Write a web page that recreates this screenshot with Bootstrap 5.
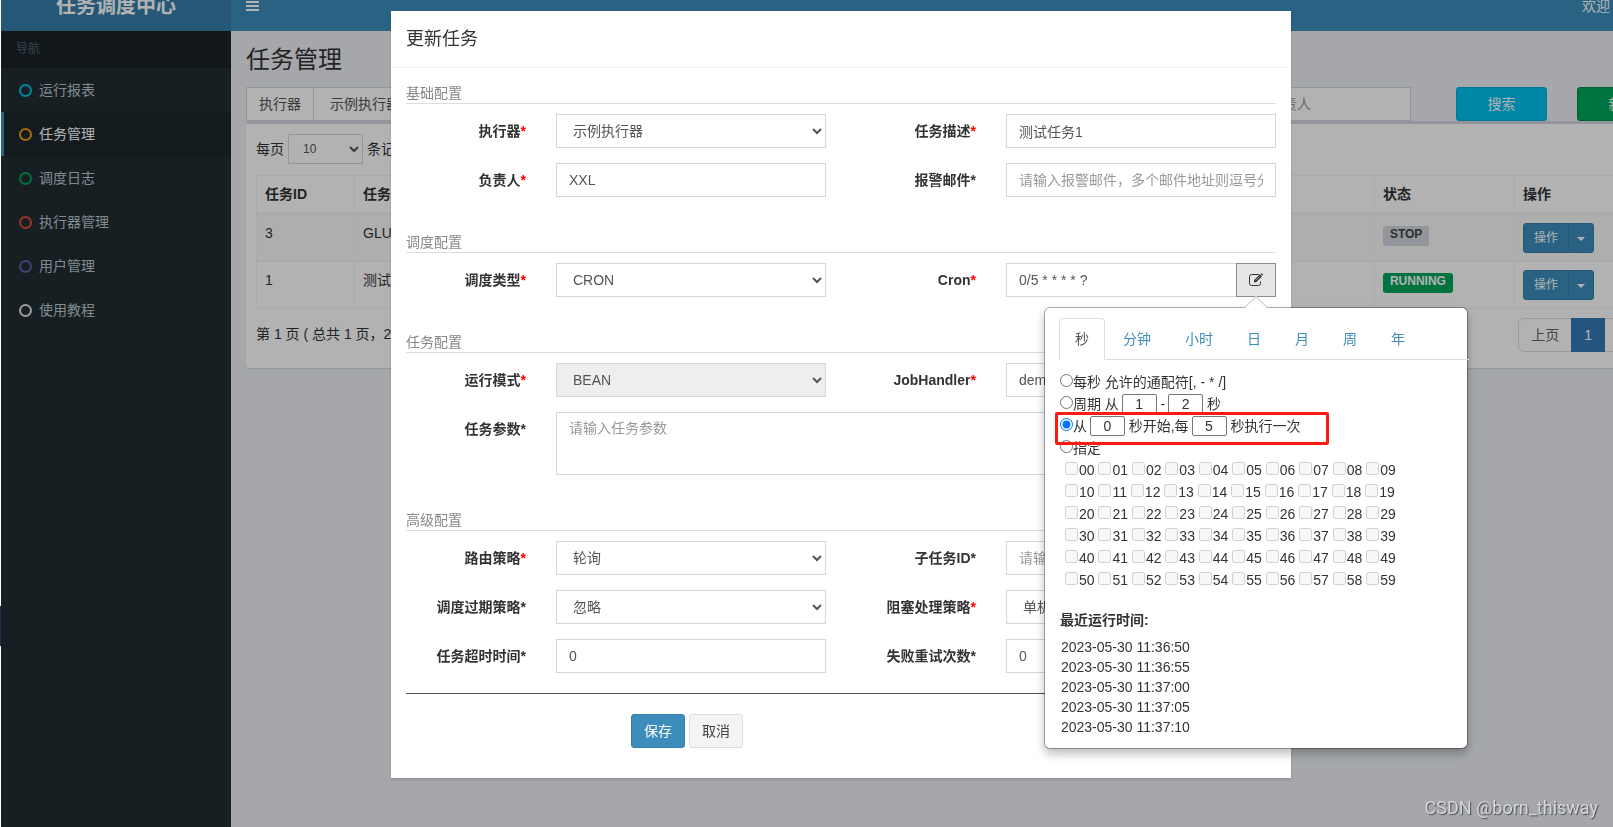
<!DOCTYPE html>
<html lang="zh-CN">
<head>
<meta charset="utf-8">
<meta name="viewport" content="width=device-width, initial-scale=1">
<title>任务调度中心</title>
<link rel="stylesheet" href="https://cdn.jsdelivr.net/npm/bootstrap@5.3.0/dist/css/bootstrap.min.css">
<style>
  :root { --edge: #d2d6de; --brand: #3c8dbc; }
  html, body { height: 100%; }
  body {
    font: 14px/20px "Liberation Sans", "Noto Sans CJK SC", sans-serif;
    color: #333; overflow: hidden;
    background: linear-gradient(#1b2c50, #1b2c50) 0 606px / 1px 40px no-repeat #fff;
  }
  a { text-decoration: none; }
  /* the console is wider than the window and scrolled down a little */
  .console { width: calc(100vw + 69px); min-height: calc(100vh + 19px); margin: -19px 0 0 1px; }
  .side { width: 230px; background: #222d32; }
  .logo { height: 50px; line-height: 50px; background: #367fa9; color: #fff; font-size: 20px; }
  .topbar { height: 50px; background: var(--brand); color: #fff; padding-right: 73px; }
  .toggle { width: 42px; }
  .toggle svg { display: block; margin: auto; }
  .nav-title { background: #1a2226; color: #4b646f; font-size: 12px; line-height: 17px; padding: 10px 15px; }
  .side a { display: flex; align-items: center; gap: 7px; height: 44px; padding-left: 15px; color: #b8c7ce; border-left: 3px solid transparent; }
  .side a.active { color: #fff; background: #1e282c; border-color: var(--brand); }
  .ring { width: 13px; height: 13px; border: 2px solid; border-radius: 50%; }
  .content { background: #ecf0f5; padding: 0 15px; }
  .content h1 { font-size: 24px; line-height: 26px; font-weight: 400; margin: 16px 0 14px; }
  .form-control, .input-group-text { font-size: 14px; line-height: 20px; padding: 6px 12px; border: 1px solid var(--edge); border-radius: 0; color: #555; background: #fff; }
  .form-control { height: 34px; }
  .form-control:disabled { background: #eee; opacity: 1; }
  select.form-control { appearance: auto; }
  textarea.form-control { height: 63px; line-height: 18px; resize: none; }
  .form-control::placeholder { color: #999; opacity: 1; }
  .btn { font-size: 14px; line-height: 20px; padding: 6px 12px; border-radius: 3px; }
  .btn-main { background: var(--brand); border-color: #367fa9; color: #fff; }
  .btn-plain { background: #f4f4f4; border-color: #ddd; color: #444; }
  .btn-find { background: #00c0ef; border-color: #00acd6; color: #fff; }
  .btn-new { background: #00a65a; border-color: #008d4c; color: #fff; }
  .btn-xs2 { font-size: 12px; line-height: 18px; padding: 5px 10px; }
  .btn-xs2.dropdown-toggle { padding: 5px 8px; }
  .btn-xs2.dropdown-toggle::after { margin: 0; border-width: 4px 4px 0; vertical-align: 1px; }
  .find .author { padding-right: 30px; }
  .panel { background: #fff; border-top: 3px solid var(--edge); border-radius: 3px; padding: 10px; box-shadow: 0 1px 1px rgba(0,0,0,.1); height: 247px; }
  .panel select.form-control { width: 75px; height: 30px; padding: 4px 10px; font-size: 12px; }
  .jobs { table-layout: fixed; margin: 11px 0 9px; color: #333; border-color: #f4f4f4; --bs-table-color: #333; }
  .jobs th, .jobs td { padding: 8px; border: 1px solid #f4f4f4; vertical-align: top; white-space: nowrap; overflow: hidden; }
  .jobs thead th { border-bottom-width: 3px; }
  .jobs tbody tr:first-child { --bs-table-bg: #f9f9f9; }
  .state { display: inline-block; font-size: 12px; font-weight: 700; line-height: 16px; padding: 0 7px 4px; margin-top: 2px; border-radius: 3px; }
  .state-stop { background: var(--edge); color: #444; }
  .state-run { background: #00a65a; color: #fff; }
  .page-link { font-size: 14px; line-height: 20px; padding: 6px 12px; color: #666; border-color: #ddd; background: #fff; }
  .page-item.active .page-link { background: #337ab7; border-color: #337ab7; color: #fff; }
  .page-note { padding-top: 6px; }
  .modal-backdrop { left: 1px; width: 100vw; }
  .modal-backdrop.show { opacity: .3; }
  .modal { width: calc(100vw + 69px); overflow: visible; }
  .modal-dialog { max-width: 900px; margin: 11px auto; }
  .modal-content { border: 0; border-radius: 0; color: #333; box-shadow: 0 2px 3px rgba(0,0,0,.125); }
  .modal-header { padding: 15px; border-color: #f4f4f4; border-radius: 0; }
  .modal-title { font-size: 18px; line-height: 26px; font-weight: 400; }
  .modal-body { padding: 15px; }
  .modal-body .row, .find { --bs-gutter-x: 30px; }
  .group-title { color: #888; line-height: 20px; border-bottom: 1px solid #ddd; margin: 0 0 10px; }
  .group-gap { margin-top: 35px; }
  .line { margin-bottom: 15px; }
  .line label { font-weight: 700; text-align: right; padding-top: 7px; }
  .req { color: red; }
  .modal-body hr { margin: 20px 0; color: #333; opacity: .85; }
  .btn-edit { width: 40px; background: #e6e6e6; border-color: #8c8c8c; border-radius: 0; padding: 0; }
  .btn-edit svg { display: block; margin: auto; }
  .cron-pop { position: absolute; top: 44px; right: -192px; width: 424px; height: 442px; padding: 10px 14px; background: #fff; border: 1px solid rgba(0,0,0,.3); border-radius: 6px; background-clip: padding-box; box-shadow: 0 5px 10px rgba(0,0,0,.25); z-index: 10; }
  .cron-pop::before { content: ""; position: absolute; top: -9px; left: 203px; width: 16px; height: 16px; background: #fff; border: solid #ccc; border-width: 1px 0 0 1px; transform: rotate(45deg); }
  .cron-pop .nav-tabs { width: 410px; gap: 2px; border-color: #ddd; }
  .cron-pop .nav-link { padding: 10px 15px; color: var(--brand); border-radius: 4px 4px 0 0; }
  .cron-pop .nav-link.active { color: #555; border-color: #ddd #ddd #fff; }
  .rules { padding-top: 11px; }
  .rules > div { height: 22px; line-height: 22px; white-space: pre; }
  .rules input[type=radio], .rules input[type=checkbox] { width: 13px; height: 13px; margin: 0 1px; vertical-align: 0; }
  .rules input[type=radio] { margin-right: 0; }
  .rules input[type=checkbox] { margin-left: 0; }
  .rules .num { width: 35px; height: 20px; padding: 0; margin: 0 0 0 -1px; border: 1px solid #767676; border-radius: 2px; text-align: center; color: #333; line-height: 18px; vertical-align: 0; }
  .picked { position: relative; }
  .picked::after { content: ""; position: absolute; left: -4px; top: -3px; width: 274px; height: 33px; border: 3px solid #fb1b10; border-radius: 2px; }
  .seconds { padding-left: 6px; }
  .recent { margin: 19px 0 7px 1px; font-weight: 700; }
  .times { margin: 0 0 0 2px; padding: 0; list-style: none; }
  .mark-text { position: fixed; right: 15px; bottom: 7px; z-index: 2000; font: 18px/24px Roboto, sans-serif; color: #d4d6d7; text-shadow: 1px 1px 1px #4c4e50; }
</style>
</head>
<body>
<div class="console d-flex">
  <aside class="side flex-shrink-0">
    <div class="logo text-center fw-bold">任务调度中心</div>
    <div class="nav-title">导航</div>
    <nav>
      <a href="#"><span class="ring" style="color:#00c0ef"></span>运行报表</a>
      <a href="#" class="active"><span class="ring" style="color:#f39c12"></span>任务管理</a>
      <a href="#"><span class="ring" style="color:#00a65a"></span>调度日志</a>
      <a href="#"><span class="ring" style="color:#dd4b39"></span>执行器管理</a>
      <a href="#"><span class="ring" style="color:#605ca8"></span>用户管理</a>
      <a href="#"><span class="ring" style="color:#dfe1e8"></span>使用教程</a>
    </nav>
  </aside>
  <div class="flex-grow-1 d-flex flex-column">
    <header class="topbar d-flex align-items-center justify-content-between">
      <button type="button" class="toggle border-0 bg-transparent p-0" aria-label="菜单"><svg width="13" height="12" fill="#fff"><path d="M0 1h13v2H0zM0 5h13v2H0zM0 9h13v2H0z"/></svg></button>
      <span>欢迎</span>
    </header>
    <main class="content flex-grow-1">
      <h1>任务管理</h1>
      <div class="row find">
        <div class="col-3"><div class="input-group flex-nowrap"><label class="input-group-text" for="fGroup">执行器</label><select id="fGroup" class="form-control"><option>示例执行器</option></select></div></div>
        <div class="col-2 offset-5 author"><input class="form-control" placeholder="请输入负责人" aria-label="负责人"></div>
        <div class="col-1"><button type="button" class="btn btn-find w-100">搜索</button></div>
        <div class="col-1"><button type="button" class="btn btn-new w-100">新增</button></div>
      </div>
      <section class="panel">
        <div class="d-flex align-items-center gap-1"><label for="len">每页</label><select id="len" class="form-control"><option>10</option></select><span>条记录</span></div>
        <table class="table jobs">
          <colgroup><col style="width:7%"><col><col style="width:10%"><col style="width:143px"></colgroup>
          <thead><tr><th>任务ID</th><th>任务描述</th><th>状态</th><th>操作</th></tr></thead>
          <tbody>
            <tr><td>3</td><td>GLUE示例任务</td><td><span class="state state-stop">STOP</span></td><td><div class="btn-group"><button type="button" class="btn btn-main btn-xs2">操作</button><button type="button" class="btn btn-main btn-xs2 dropdown-toggle" aria-label="更多"></button></div></td></tr>
            <tr><td>1</td><td>测试任务1</td><td><span class="state state-run">RUNNING</span></td><td><div class="btn-group"><button type="button" class="btn btn-main btn-xs2">操作</button><button type="button" class="btn btn-main btn-xs2 dropdown-toggle" aria-label="更多"></button></div></td></tr>
          </tbody>
        </table>
        <div class="d-flex justify-content-between align-items-start">
          <div class="page-note">第 1 页 ( 总共 1 页，2 条记录 )</div>
          <ul class="pagination m-0"><li class="page-item"><a class="page-link" href="#">上页</a></li><li class="page-item active"><a class="page-link" href="#">1</a></li><li class="page-item"><a class="page-link" href="#">下页</a></li></ul>
        </div>
      </section>
    </main>
  </div>
</div>

<div class="modal-backdrop show"></div>
<div class="modal d-block" role="dialog" aria-labelledby="mt">
  <div class="modal-dialog">
    <div class="modal-content">
      <div class="modal-header"><h4 class="modal-title" id="mt">更新任务</h4></div>
      <form class="modal-body">
        <p class="group-title">基础配置</p>
        <div class="row line">
          <label class="col-2" for="a1">执行器<span class="req">*</span></label><div class="col-4"><select id="a1" class="form-control"><option>示例执行器</option></select></div>
          <label class="col-2" for="a2">任务描述<span class="req">*</span></label><div class="col-4"><input id="a2" class="form-control" value="测试任务1"></div>
        </div>
        <div class="row line">
          <label class="col-2" for="a3">负责人<span class="req">*</span></label><div class="col-4"><input id="a3" class="form-control" value="XXL"></div>
          <label class="col-2" for="a4">报警邮件*</label><div class="col-4"><input id="a4" class="form-control" placeholder="请输入报警邮件，多个邮件地址则逗号分隔"></div>
        </div>
        <p class="group-title group-gap">调度配置</p>
        <div class="row line">
          <label class="col-2" for="b1">调度类型<span class="req">*</span></label><div class="col-4"><select id="b1" class="form-control"><option>CRON</option></select></div>
          <label class="col-2" for="b2">Cron<span class="req">*</span></label>
          <div class="col-4"><div class="position-relative">
            <div class="input-group"><input id="b2" class="form-control" value="0/5 * * * * ?"><button type="button" class="btn btn-edit" aria-label="编辑"><svg width="14" height="14" viewBox="0 0 14 14" fill="none" stroke="#333"><path d="M11.5 8.5v2a2 2 0 0 1-2 2h-7a2 2 0 0 1-2-2v-7a2 2 0 0 1 2-2h7l.8.2"/><path d="M5 7.2 10.9 1.3l2.1 2.1L7.1 9.3H5z" fill="#333" stroke="none"/><path d="M11.4.8l.5-.4q.5-.3 1 .2l.7.7q.5.5.1 1l-.4.5z" fill="#333" stroke="none"/><path d="M6.9 7.3 10.7 3.5" stroke="#e6e6e6" stroke-width=".6"/></svg></button></div>
            <div class="cron-pop">
              <ul class="nav nav-tabs">
                <li class="nav-item"><a class="nav-link active" href="#">秒</a></li><li class="nav-item"><a class="nav-link" href="#">分钟</a></li><li class="nav-item"><a class="nav-link" href="#">小时</a></li><li class="nav-item"><a class="nav-link" href="#">日</a></li><li class="nav-item"><a class="nav-link" href="#">月</a></li><li class="nav-item"><a class="nav-link" href="#">周</a></li><li class="nav-item"><a class="nav-link" href="#">年</a></li>
              </ul>
              <div class="rules" id="rules">
                <div><input type="radio" name="sec" id="r1"><label class="p-0 fw-normal" for="r1">每秒 允许的通配符[, - * /]</label></div>
                <div><input type="radio" name="sec" id="r2"><label class="p-0 fw-normal" for="r2">周期 从</label> <input class="num" value="1" aria-label="起"> - <input class="num" value="2" aria-label="止"> 秒</div>
                <div class="picked"><input type="radio" name="sec" id="r3" checked><label class="p-0 fw-normal" for="r3">从</label> <input class="num" value="0" aria-label="开始"> 秒开始,每 <input class="num" value="5" aria-label="间隔"> 秒执行一次</div>
                <div><input type="radio" name="sec" id="r4"><label class="p-0 fw-normal" for="r4">指定</label></div>
              </div>
              <div class="recent">最近运行时间:</div>
              <ul class="times"><li>2023-05-30 11:36:50</li><li>2023-05-30 11:36:55</li><li>2023-05-30 11:37:00</li><li>2023-05-30 11:37:05</li><li>2023-05-30 11:37:10</li></ul>
            </div>
          </div></div>
        </div>
        <p class="group-title group-gap">任务配置</p>
        <div class="row line">
          <label class="col-2" for="c1">运行模式<span class="req">*</span></label><div class="col-4"><select id="c1" class="form-control" disabled><option>BEAN</option></select></div>
          <label class="col-2" for="c2">JobHandler<span class="req">*</span></label><div class="col-4"><input id="c2" class="form-control" value="demoJobHandler"></div>
        </div>
        <div class="row line">
          <label class="col-2" for="c3">任务参数*</label><div class="col-10"><textarea id="c3" class="form-control" placeholder="请输入任务参数"></textarea></div>
        </div>
        <p class="group-title group-gap">高级配置</p>
        <div class="row line">
          <label class="col-2" for="d1">路由策略<span class="req">*</span></label><div class="col-4"><select id="d1" class="form-control"><option>轮询</option></select></div>
          <label class="col-2" for="d2">子任务ID*</label><div class="col-4"><input id="d2" class="form-control" placeholder="请输入子任务ID"></div>
        </div>
        <div class="row line">
          <label class="col-2" for="d3">调度过期策略*</label><div class="col-4"><select id="d3" class="form-control"><option>忽略</option></select></div>
          <label class="col-2" for="d4">阻塞处理策略<span class="req">*</span></label><div class="col-4"><select id="d4" class="form-control"><option>单机串行</option></select></div>
        </div>
        <div class="row line">
          <label class="col-2" for="d5">任务超时时间*</label><div class="col-4"><input id="d5" class="form-control" value="0"></div>
          <label class="col-2" for="d6">失败重试次数*</label><div class="col-4"><input id="d6" class="form-control" value="0"></div>
        </div>
        <hr>
        <div class="row line"><div class="col-6 offset-3 d-flex gap-1"><button type="submit" class="btn btn-main">保存</button><button type="button" class="btn btn-plain">取消</button></div></div>
      </form>
    </div>
  </div>
</div>
<div class="mark-text">CSDN @born_thisway</div>
<script src="https://cdn.jsdelivr.net/npm/bootstrap@5.3.0/dist/js/bootstrap.bundle.min.js"></script>
<script>
  // sixty second boxes, ten to a line
  const rules = document.getElementById('rules');
  for (let r = 0; r < 6; r++) {
    const cells = [];
    for (let c = 0; c < 10; c++) {
      const n = `${r}${c}`;
      cells.push(`<input type="checkbox" id="s${n}" disabled><label class="p-0 fw-normal" for="s${n}">${n}</label>`);
    }
    rules.insertAdjacentHTML('beforeend', `<div class="seconds">${cells.join(' ')}</div>`);
  }
</script>
</body>
</html>
